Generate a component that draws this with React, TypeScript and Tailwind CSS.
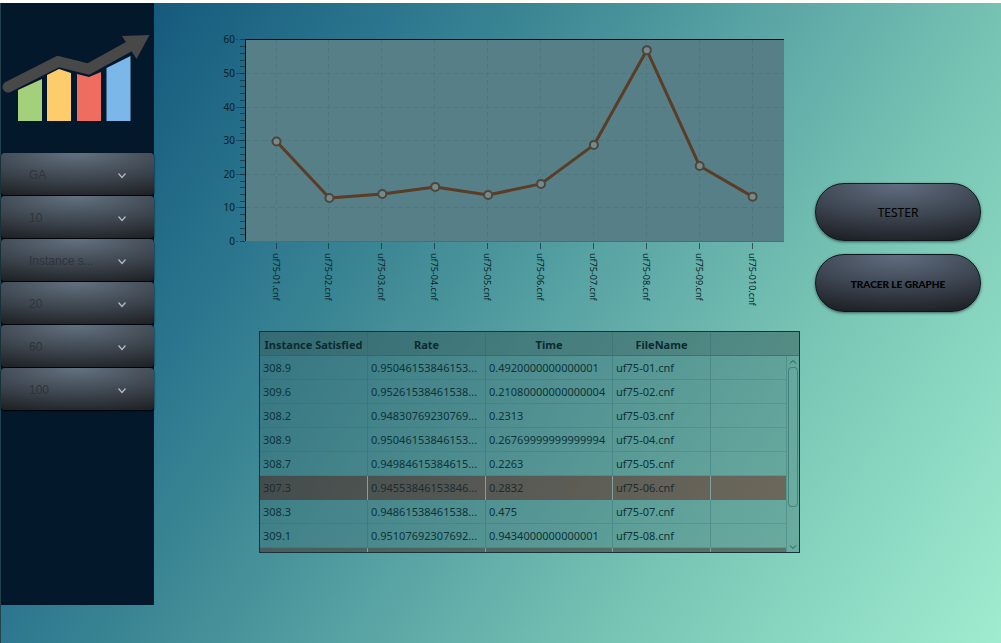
import React from "react";

const points = [
  { name: "uf75-01.cnf", value: 29.6 },
  { name: "uf75-02.cnf", value: 12.8 },
  { name: "uf75-03.cnf", value: 14 },
  { name: "uf75-04.cnf", value: 16.1 },
  { name: "uf75-05.cnf", value: 13.7 },
  { name: "uf75-06.cnf", value: 17 },
  { name: "uf75-07.cnf", value: 28.6 },
  { name: "uf75-08.cnf", value: 56.8 },
  { name: "uf75-09.cnf", value: 22.3 },
  { name: "uf75-010.cnf", value: 13.2 },
];

const rows = [
  ["308.9", "0.95046153846153...", "0.4920000000000001", "uf75-01.cnf"],
  ["309.6", "0.95261538461538...", "0.21080000000000004", "uf75-02.cnf"],
  ["308.2", "0.94830769230769...", "0.2313", "uf75-03.cnf"],
  ["308.9", "0.95046153846153...", "0.26769999999999994", "uf75-04.cnf"],
  ["308.7", "0.94984615384615...", "0.2263", "uf75-05.cnf"],
  ["307.3", "0.94553846153846...", "0.2832", "uf75-06.cnf"],
  ["308.3", "0.94861538461538...", "0.475", "uf75-07.cnf"],
  ["309.1", "0.95107692307692...", "0.9434000000000001", "uf75-08.cnf"],
];
const selectedRow = 5;

const fields = [
  { label: "Algorithm", value: "GA" },
  { label: "Population", value: "10" },
  { label: "Instance", value: "Instance s..." },
  { label: "Iterations", value: "20" },
  { label: "Crossover", value: "60" },
  { label: "Mutation", value: "100" },
];

const px = (i: number) => 276.5 + i * 52.9;
const py = (v: number) => 241 - v * 3.36;

function Logo() {
  return (
    <svg viewBox="0 0 153 100" className="mt-[25px] w-full" aria-label="Growth chart" role="img">
      <g transform="translate(-1 -28)">
        <path d="M18 90 42 79V121H18Z" fill="#a4d07b" />
        <path d="M47 75 59 69 71 73V121H47Z" fill="#fecd6b" />
        <path d="M77 74 89 77 101 72V121H77Z" fill="#ef6d60" />
        <path d="M106.500 68 130.500 56V121H106.500Z" fill="#7bb7e8" />
        <path d="M8 87 58 61.5 88.500 69 130 46" fill="none" stroke="#484849" strokeWidth="11" strokeLinecap="round" />
        <path d="M122 36 149.500 35 136.500 59Z" fill="#484849" />
      </g>
    </svg>
  );
}

function Field({ label, value }: { label: string; value: string }) {
  return (
    <label className="relative block">
      <select
        aria-label={label}
        defaultValue={value}
        className="block h-[42px] w-full appearance-none rounded bg-[radial-gradient(ellipse_110%_110%_at_50%_0%,#63717f_0%,#414a54_50%,#1e2125_100%)] pl-7 pr-10 pt-0.5 text-xs text-[#2f343a] shadow-[0_1px_2px_#000]"
      >
        <option>{value}</option>
      </select>
      <svg viewBox="0 0 10 8" className="pointer-events-none absolute right-[27px] top-[19px] h-2 w-[10px]" fill="none" stroke="#b4bbc1" strokeWidth="1.2">
        <path d="M1.500 1.500 5 5.500 8.500 1.500" />
      </svg>
    </label>
  );
}

function Chart() {
  const ticks = [0, 10, 20, 30, 40, 50, 60];
  const minor = Array.from({ length: 31 }, (_, i) => i * 2);
  return (
    <svg viewBox="215 30 585 280" className="w-full" role="img" aria-label="Results per instance">
      <rect x="246" y="40" width="538" height="202" fill="#567f88" />
      <g stroke="#4e7780" strokeWidth="1" strokeDasharray="5 3">
        {ticks.slice(1, 6).map((t) => (
          <path key={t} d={`M246 ${Math.round(py(t)) + 0.5}H784`} />
        ))}
        {points.map((p, i) => (
          <path key={p.name} d={`M${Math.round(px(i)) - 0.5} 40V241`} />
        ))}
      </g>
      <path d="M245.500 241V39.500H784" fill="none" stroke="#02090b" />
      <path d="M246 241.500H784" stroke="#4a6f78" />
      <g stroke="#12313b" strokeWidth="1">
        {minor.map((t) => (
          <path key={t} d={`M240 ${Math.round(py(t)) + 0.5}H245`} opacity="0.7" />
        ))}
        {ticks.map((t) => (
          <path key={t} d={`M236 ${Math.round(py(t)) + 0.5}H${t % 60 ? 245 : 238}`} opacity="0.5" />
        ))}
        {points.map((p, i) => (
          <path key={p.name} d={`M${Math.round(px(i)) - 0.5} 243V249`} opacity="0.7" />
        ))}
      </g>
      <g fontSize="10" fill="#0c2026">
        {ticks.map((t) => (
          <text key={t} x="235" y={Math.round(py(t)) + 4} textAnchor="end">
            {t}
          </text>
        ))}
      </g>
      <g fontSize="9" fill="#0a2328">
        {points.map((p, i) => (
          <text key={p.name} transform={`translate(${Math.round(px(i)) - 4} 253) rotate(90)`}>
            {p.name}
          </text>
        ))}
      </g>
      <polyline
        points={points.map((p, i) => `${px(i)},${py(p.value)}`).join(" ")}
        fill="none"
        stroke="#5b3c24"
        strokeWidth="3"
        strokeLinejoin="round"
      />
      {points.map((p, i) => (
        <circle key={p.name} cx={px(i)} cy={py(p.value)} r="4" fill="#768a8b" stroke="#4c463c" strokeWidth="2" />
      ))}
    </svg>
  );
}

const line = "border-l border-[#285f66]/30";

function Results() {
  return (
    <div className="ml-11 mt-[21px] border border-[#12343a] bg-[#3a646a]/35">
      <table className="w-full table-fixed border-separate border-spacing-0 text-[11px] leading-4 text-[#0d3339]">
        <colgroup>
          <col className="w-[107px]" />
          <col className="w-[118px]" />
          <col className="w-[127px]" />
          <col className="w-[98px]" />
          <col />
          <col className="w-[13px]" />
        </colgroup>
        <thead>
          <tr className="h-6 bg-[#2f4a48]/25 text-[#0b2a2f]">
            {["Instance Satisfied", "Rate", "Time", "FileName"].map((h, i) => (
              <th key={h} className={`whitespace-nowrap border-b border-b-[#285f66]/50 px-0 pb-0 pt-0.5 text-center font-bold ${i ? line : ""}`}>
                {h}
              </th>
            ))}
            <th colSpan={2} className={`border-b border-b-[#285f66]/50 p-0 ${line}`} />
          </tr>
        </thead>
        <tbody>
          {rows.map((r, n) => {
            const selected = n === selectedRow;
            const edge = selected ? "border-l border-[#7fa09c]" : line;
            return (
              <tr
                key={r[3]}
                className={
                  selected
                    ? "h-6 bg-[linear-gradient(90deg,rgba(73,37,30,0.55),rgba(113,50,36,0.55))] text-[#1d2c2e]"
                    : "h-6"
                }
              >
                {[...r, ""].map((c, i) => (
                  <td
                    key={i}
                    className={`whitespace-nowrap px-[3px] py-0 ${i ? edge : ""} ${selected ? "" : "border-b border-b-[#285f66]/20"}`}
                  >
                    {c}
                  </td>
                ))}
                {n === 0 && (
                  <td rowSpan={9} className="h-[195px] border-l border-[#285f66]/30 bg-[#6fae9f]/20 p-0">
                    <div className="flex h-[195px] flex-col items-center">
                      <svg viewBox="0 0 12 10" className="h-[10px] w-3" fill="none" stroke="#225c59">
                        <path d="M3 6.500 6 3.500 9 6.500" />
                      </svg>
                      <div className="h-[140px] w-[10px] rounded-sm border border-[#2c6a67]/60 bg-[#6db5a6]/20" />
                      <svg viewBox="0 0 12 10" className="mt-auto h-[10px] w-3" fill="none" stroke="#225c59">
                        <path d="M3 3.500 6 6.500 9 3.500" />
                      </svg>
                    </div>
                  </td>
                )}
              </tr>
            );
          })}
          <tr className="h-1 bg-[#4b3a30]/50">
            {[0, 1, 2, 3, 4].map((i) => (
              <td key={i} className={`p-0 ${i ? "border-l border-[#7fa09c]" : ""}`} />
            ))}
          </tr>
        </tbody>
      </table>
    </div>
  );
}

const pill =
  "h-[58px] w-full rounded-full border border-[#0d161d] bg-[radial-gradient(ellipse_110%_110%_at_50%_0%,#616d80_0%,#3e4753_50%,#1a1c21_100%)] pt-0.5 text-black shadow-[0_1px_3px_#0008]";

export default function App() {
  return (
    <div className="flex min-h-screen flex-col font-['Noto_Sans',sans-serif]">
      <div className="h-[3px] bg-[#fcfffa]" />
      <div className="flex flex-1 border-l border-[#24424e] bg-[linear-gradient(123deg,#0b4a6e_0%,#175c7e_12%,#2b768e_28%,#3d8894_39%,#60aba8_58%,#77c4b4_72%,#a0ecd0_100%)]">
        <aside className="mb-[38px] w-[153px] shrink-0 bg-[#03192b]">
          <Logo />
          <div className="mt-[25px] flex flex-col gap-px font-['Liberation_Sans',sans-serif]">
            {fields.map((f) => (
              <Field key={f.label} {...f} />
            ))}
          </div>
        </aside>
        <main className="flex min-w-0 flex-1 gap-[15px] pl-[61px] pr-5">
          <section className="min-w-0 flex-1 pt-[27px]">
            <Chart />
            <Results />
          </section>
          <div className="flex w-[166px] shrink-0 flex-col gap-[13px] pt-[180px]">
            <button type="button" className={`${pill} text-xs`}>
              TESTER
            </button>
            <button type="button" className={`${pill} font-['Lato',sans-serif] text-[10px] font-black`}>
              TRACER LE GRAPHE
            </button>
          </div>
        </main>
      </div>
    </div>
  );
}
